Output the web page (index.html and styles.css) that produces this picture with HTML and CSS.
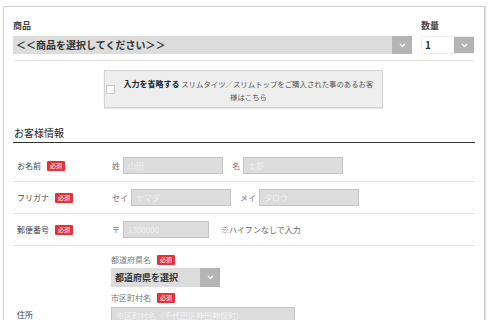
FILE: index.html
```html
<!DOCTYPE html>
<html lang="ja">
<head>
  <meta charset="UTF-8" />
  <meta name="viewport" content="width=device-width,initial-scale=1.0" />
  <title>ご注文フォーム</title>
  <link rel="stylesheet" href="styles.css">
</head>
<body>

  <div class="order-box">
    <div class="product-row">
      <div class="field product">
        <div class="field-label">商品</div>
        <div class="select">
          <span class="select-text">＜＜商品を選択してください＞＞</span>
          <span class="arrow"><svg width="7" height="5" viewBox="0 0 7 5"><polyline points="1,1 3.5,3.5 6,1" fill="none" stroke="#fff" stroke-width="1.3"/></svg></span>
        </div>
      </div>
      <div class="field qty">
        <div class="field-label">数量</div>
        <div class="select white">
          <span class="select-text">1</span>
          <span class="arrow"><svg width="7" height="5" viewBox="0 0 7 5"><polyline points="1,1 3.5,3.5 6,1" fill="none" stroke="#fff" stroke-width="1.3"/></svg></span>
        </div>
      </div>
    </div>

    <div class="skip-wrap">
      <label class="skip-box">
        <span class="check"></span>
        <span class="skip-text"><b>入力を省略する</b> スリムタイツ／スリムトップをご購入された事のあるお客<br>様はこちら</span>
      </label>
    </div>

    <h2 class="section-title">お客様情報</h2>

    <div class="form-row">
      <div class="row-label">お名前<span class="req">必須</span></div>
      <div class="row-fields">
        <span class="sub first">姓</span><input class="text w100" placeholder="山田">
        <span class="sub">名</span><input class="text w100" placeholder="太郎">
      </div>
    </div>

    <div class="form-row">
      <div class="row-label">フリガナ<span class="req">必須</span></div>
      <div class="row-fields">
        <span class="sub first">セイ</span><input class="text w100" placeholder="ヤマダ">
        <span class="sub">メイ</span><input class="text w100" placeholder="タロウ">
      </div>
    </div>

    <div class="form-row">
      <div class="row-label">郵便番号<span class="req">必須</span></div>
      <div class="row-fields">
        <span class="sub first">〒</span><input class="text w86" placeholder="1300000">
        <span class="note">※ハイフンなしで入力</span>
      </div>
    </div>

    <div class="form-row address">
      <div class="row-label">住所</div>
      <div class="row-fields stack">
        <div class="sub-label">都道府県名<span class="req">必須</span></div>
        <div class="select pref">
          <span class="select-text">都道府県を選択</span>
          <span class="arrow"><svg width="7" height="5" viewBox="0 0 7 5"><polyline points="1,1 3.5,3.5 6,1" fill="none" stroke="#fff" stroke-width="1.3"/></svg></span>
        </div>
        <div class="sub-label">市区町村名<span class="req">必須</span></div>
        <input class="text w184" placeholder="市区町村名（千代田区神田神保町）">
        <div class="sub-label">番地<span class="req">必須</span></div>
        <input class="text w184" placeholder="番地（1-3-5）">
      </div>
    </div>
  </div>

</body>
</html>
```

FILE: styles.css
```css
* { margin: 0; padding: 0; box-sizing: border-box; }
body {
  font-family: "Noto Sans CJK JP", "Noto Sans", sans-serif;
  background: #fff;
  color: #333;
}
.order-box {
  margin: 6px 5px 0 3px;
  border: 1px solid #cfcfcf;
  box-shadow: 1px 0 1px rgba(0,0,0,0.12);
  padding: 12px 10px 20px 9px;
}
.product-row {
  display: flex;
  gap: 9px;
  padding-bottom: 6px;
  border-bottom: 1px solid #e4e4e4;
}
.field.product { flex: 1; }
.field.qty { flex: 0 0 53px; }
.field-label {
  font-size: 9px;
  line-height: 13px;
  font-weight: bold;
  color: #444;
  margin-bottom: 4px;
}
.select {
  display: flex;
  height: 18px;
  background: #dcdcdc;
}
.select.white { background: #fff; border: 1px solid #eee; border-right: 0; }
.select-text {
  flex: 1;
  padding-left: 3px;
  font-size: 10px;
  line-height: 18px;
  font-weight: bold;
  color: #333;
  white-space: nowrap;
  overflow: hidden;
}
.select.white .select-text { line-height: 16px; }
.arrow {
  flex: 0 0 20px;
  background: #b4b4b4;
  display: flex;
  align-items: center;
  justify-content: center;
}

.skip-wrap {
  display: flex;
  justify-content: center;
  margin-top: 9px;
}
.skip-box {
  width: 279px;
  height: 38px;
  display: flex;
  align-items: center;
  gap: 6px;
  background: #eee;
  border: 1px solid #d4d4d4;
  box-shadow: 0 1px 1px rgba(0,0,0,0.1);
  padding: 0 6px 0 1px;
}
.check {
  flex: 0 0 9px;
  height: 9px;
  background: #fff;
  border: 1px solid #ccc;
}
.skip-text {
  flex: 1;
  text-align: center;
  font-size: 7.4px;
  line-height: 13px;
  color: #555;
  padding-top: 1px;
}
.skip-text b { font-size: 8px; color: #222; }

.section-title {
  margin-top: 18px;
  font-size: 10px;
  line-height: 14px;
  font-weight: normal;
  color: #222;
  padding: 0 0 2px 1px;
  border-bottom: 1px solid #333;
  margin-right: -1px;
}

.form-row {
  display: flex;
  align-items: center;
  padding: 7px 0;
  border-bottom: 1px solid #e4e4e4;
  margin-right: -1px;
}
.section-title + .form-row { margin-top: 7px; }
.row-label {
  flex: 0 0 99px;
  padding-left: 4px;
  font-size: 8px;
  color: #444;
  display: flex;
  align-items: center;
}
.req {
  display: inline-block;
  margin-left: 6px;
  background: #e4323b;
  color: #fff;
  font-size: 6px;
  line-height: 10px;
  padding: 0 3px;
  border-radius: 1px;
}
.row-fields {
  flex: 1;
  display: flex;
  align-items: center;
}
.sub {
  font-size: 8px;
  color: #777;
  margin: 0 3px 0 9px;
}
.sub.first { margin-left: 0; }
.text {
  height: 17px;
  background: #dcdcdc;
  border: 1px solid #c4c4c4;
  font-family: inherit;
  font-size: 8px;
  padding: 0 4px;
  outline: none;
}
.text::placeholder { color: #f2f2f2; }
.w100 { width: 100px; }
.w86 { width: 86px; }
.w184 { width: 184px; }
.note {
  margin-left: 12px;
  font-size: 8px;
  color: #666;
}

.row-fields.stack {
  flex-direction: column;
  align-items: flex-start;
  margin-left: -1px;
  padding-bottom: 14px;
}
.sub-label {
  font-size: 8px;
  line-height: 14px;
  color: #777;
  display: flex;
  align-items: center;
  margin-top: 4px;
}
.sub-label:first-child { margin-top: 0; }
.sub-label + .select, .sub-label + .text { margin-top: 2px; }
.sub-label:first-child + .select { margin-top: 1px; }
.select.pref { width: 109px; height: 19px; }
.select.pref .select-text { font-size: 9px; line-height: 19px; padding-left: 4px; }
```
